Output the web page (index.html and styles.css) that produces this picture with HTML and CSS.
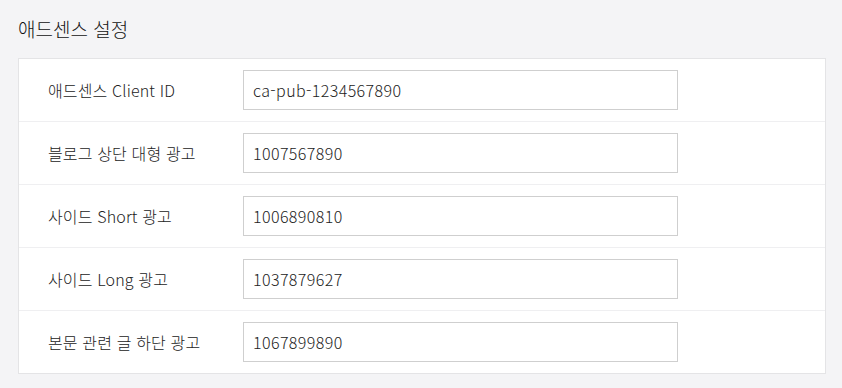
FILE: index.html
```html
<!DOCTYPE html>
<html lang="ko">
<head>
    <meta charset="UTF-8">
    <title>애드센스 설정</title>
    <link rel="stylesheet" href="styles.css">
</head>
<body>
    <h2 class="section-title">애드센스 설정</h2>
    <div class="settings-card">
        <div class="setting-row">
            <label for="clientId">애드센스 Client ID</label>
            <input type="text" id="clientId" value="ca-pub-1234567890">
        </div>
        <div class="setting-row">
            <label for="topAd">블로그 상단 대형 광고</label>
            <input type="text" id="topAd" value="1007567890">
        </div>
        <div class="setting-row">
            <label for="shortAd">사이드 Short 광고</label>
            <input type="text" id="shortAd" value="1006890810">
        </div>
        <div class="setting-row">
            <label for="longAd">사이드 Long 광고</label>
            <input type="text" id="longAd" value="1037879627">
        </div>
        <div class="setting-row">
            <label for="bottomAd">본문 관련 글 하단 광고</label>
            <input type="text" id="bottomAd" value="1067899890">
        </div>
    </div>
</body>
</html>
```

FILE: styles.css
```css
body {
    margin: 0;
    padding: 0 16px 0 18px;
    background-color: #f4f4f6;
    font-family: "Noto Sans CJK KR", "Noto Sans", sans-serif;
    color: #222;
}
.section-title {
    margin: 0;
    height: 58px;
    line-height: 58px;
    font-size: 19px;
    font-weight: 300;
    color: #111;
}
.settings-card {
    width: 806px;
    background-color: #fff;
    border: 1px solid #e4e4e6;
}
.setting-row {
    display: flex;
    align-items: center;
    padding: 11px 0 11px 29px;
    border-bottom: 1px solid #efeff1;
}
.setting-row:last-child {
    border-bottom: none;
}
.setting-row label {
    width: 195px;
    font-size: 16px;
    font-weight: 300;
    letter-spacing: 0.15px;
    color: #222;
}
.setting-row input {
    box-sizing: border-box;
    width: 435px;
    height: 40px;
    padding: 0 9px;
    border: 1px solid #cfcfcf;
    font-family: inherit;
    font-size: 16px;
    font-weight: 300;
    letter-spacing: 0.4px;
    color: #222;
    outline: none;
}
```
